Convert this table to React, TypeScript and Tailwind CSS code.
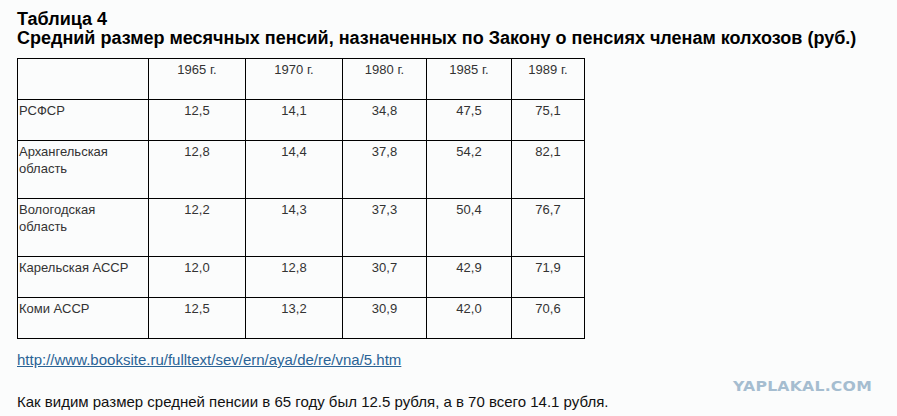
import React from 'react'

const years = ['1965 г.', '1970 г.', '1980 г.', '1985 г.', '1989 г.']

const rows: { name: string[]; values: string[] }[] = [
  { name: ['РСФСР'], values: ['12,5', '14,1', '34,8', '47,5', '75,1'] },
  { name: ['Архангельская', 'область'], values: ['12,8', '14,4', '37,8', '54,2', '82,1'] },
  { name: ['Вологодская', 'область'], values: ['12,2', '14,3', '37,3', '50,4', '76,7'] },
  { name: ['Карельская АССР'], values: ['12,0', '12,8', '30,7', '42,9', '71,9'] },
  { name: ['Коми АССР'], values: ['12,5', '13,2', '30,9', '42,0', '70,6'] }
]

const colWidths = ['w-[131px]', 'w-[97px]', 'w-[97px]', 'w-[84px]', 'w-[85px]', 'w-[73px]']

export default function App() {
  return (
    <div className="relative w-[897px] h-[416px] overflow-hidden bg-[#fbfcfc] font-['Liberation_Sans',Arial,sans-serif] text-[#111]">
      <div className="pl-[17px] pt-[10px]">
        {/* Заголовок */}
        <h1 className="text-[18px] font-bold leading-[19px] text-black">Таблица 4</h1>
        <h2 className="text-[18px] font-bold leading-[19px] text-black">
          Средний размер месячных пенсий, назначенных по Закону о пенсиях членам колхозов (руб.)
        </h2>

        {/* Таблица */}
        <table className="mt-[10px] table-fixed border-collapse text-[13px] leading-[17px] text-[#333]">
          <colgroup>
            {colWidths.map((w, i) => (
              <col key={i} className={w} />
            ))}
          </colgroup>
          <tbody>
            <tr>
              <td className="border border-black pt-[2px] pb-[21px] px-[1px] align-top"></td>
              {years.map(y => (
                <td key={y} className="border border-black pt-[2px] pb-[21px] text-center align-top">
                  {y}
                </td>
              ))}
            </tr>
            {rows.map(row => (
              <tr key={row.name.join(' ')}>
                <td className="border border-black pt-[2px] pb-[21px] px-[1px] align-top">
                  {row.name.map((n, i) => (
                    <div key={i}>{n}</div>
                  ))}
                </td>
                {row.values.map((v, i) => (
                  <td key={i} className="border border-black pt-[2px] pb-[21px] text-center align-top">
                    {v}
                  </td>
                ))}
              </tr>
            ))}
          </tbody>
        </table>

        {/* Источник */}
        <a
          href="#"
          className="mt-[12px] block w-fit text-[15px] leading-[18px] text-[#2a6396] underline"
        >
          http://www.booksite.ru/fulltext/sev/ern/aya/de/re/vna/5.htm
        </a>

        <p className="mt-[24px] text-[15px] leading-[18px] text-[#111]">
          Как видим размер средней пенсии в 65 году был 12.5 рубля, а в 70 всего 14.1 рубля.
        </p>
      </div>

      {/* Водяной знак */}
      <div className="absolute left-[733px] top-[377px] origin-left scale-x-[1.12] font-['DejaVu_Sans',sans-serif] text-[14px] font-black leading-[18px] tracking-[0.2px] text-[#a5bdd0]">
        YAPLAKAL.COM
      </div>
    </div>
  )
}
